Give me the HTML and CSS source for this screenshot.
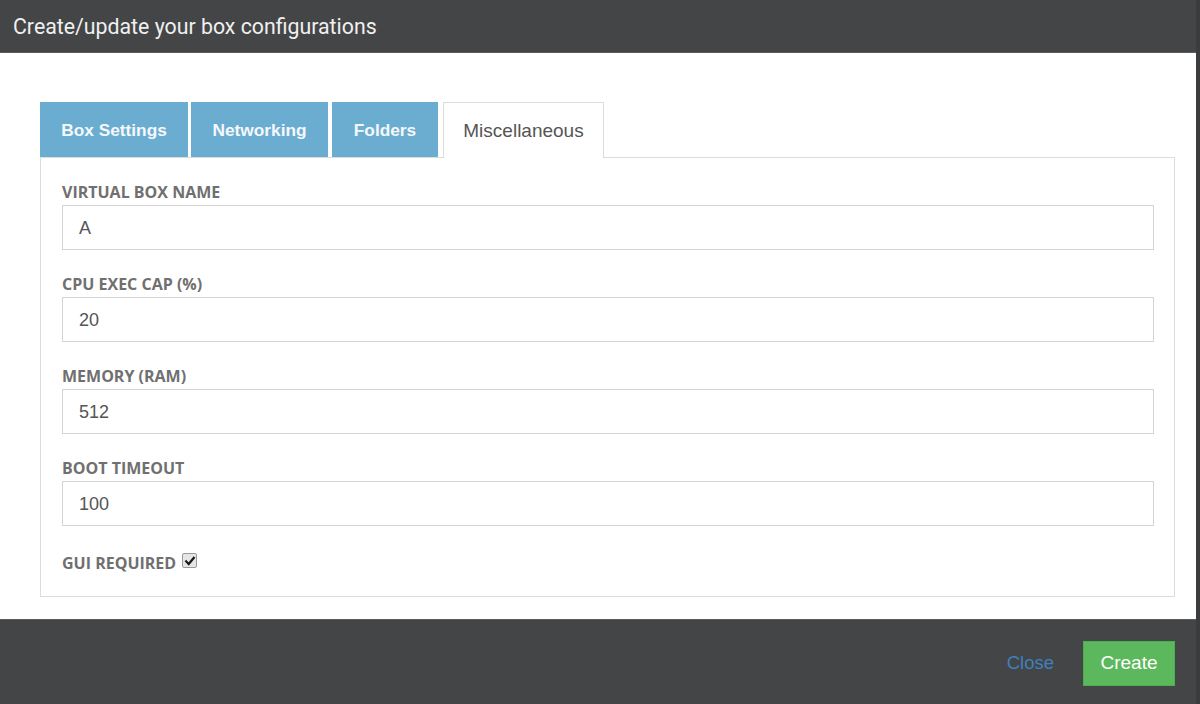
FILE: index.html
```html
<!DOCTYPE html>
<html>
<head>
<meta charset="utf-8">
<link rel="stylesheet" href="styles.css">
</head>
<body>
<div class="modal">
  <header class="modal-header">Create/update your box configurations</header>
  <main class="modal-body">
    <nav class="tabs">
      <span class="tab tab-box">Box Settings</span>
      <span class="tab tab-net">Networking</span>
      <span class="tab tab-fold">Folders</span>
      <span class="tab tab-active">Miscellaneous</span>
    </nav>
    <section class="panel">
      <div class="group">
        <label class="label">VIRTUAL BOX NAME</label>
        <div class="input">A</div>
      </div>
      <div class="group">
        <label class="label">CPU EXEC CAP (%)</label>
        <div class="input">20</div>
      </div>
      <div class="group">
        <label class="label">MEMORY (RAM)</label>
        <div class="input">512</div>
      </div>
      <div class="group">
        <label class="label">BOOT TIMEOUT</label>
        <div class="input">100</div>
      </div>
      <div class="check-row">
        <label class="label">GUI REQUIRED</label>
        <span class="checkbox"><svg viewBox="0 0 12 12" width="12" height="12"><path d="M2.2 6.4 L4.7 9 L9.8 2.8" fill="none" stroke="#1a1a1a" stroke-width="2.2" stroke-linecap="square"/></svg></span>
      </div>
    </section>
  </main>
  <footer class="modal-footer">
    <span class="close">Close</span>
    <span class="create">Create</span>
  </footer>
</div>
</body>
</html>
```
FILE: styles.css
```css
html, body { margin: 0; padding: 0; }
body {
  background: #3b3c3e;
  width: 1200px;
  height: 704px;
  overflow: hidden;
}
.modal {
  width: 1196px;
  height: 704px;
  display: flex;
  flex-direction: column;
}
.modal-header {
  height: 52px;
  background: #444547;
  border-bottom: 1px solid #5a5b5d;
  color: #f0f0f0;
  font-family: Roboto, "Liberation Sans", sans-serif;
  font-size: 21.3px;
  line-height: 53px;
  padding-left: 13px;
}
.modal-body {
  background: #fff;
  height: 566px;
  padding: 49px 21px 0 40px;
  box-sizing: border-box;
}
.tabs {
  display: flex;
  height: 55px;
  align-items: stretch;
}
.tab {
  font-family: "Liberation Sans", Arial, sans-serif;
  font-size: 17.3px;
  display: flex;
  align-items: center;
  justify-content: center;
  box-sizing: border-box;
  padding-top: 1px;
}
.tab-box, .tab-net, .tab-fold {
  background: #6badd1;
  color: #f4f8fb;
  font-weight: bold;
}
.tab-box { width: 148px; margin-right: 3px; }
.tab-net { width: 137px; margin-right: 4px; }
.tab-fold { width: 106px; margin-right: 5px; }
.tab-active {
  width: 161px;
  background: #fff;
  color: #555;
  font-size: 19px;
  border: 1px solid #dcdcdc;
  border-bottom: none;
  margin-bottom: -1px;
  position: relative;
  z-index: 1;
}
.panel {
  border: 1px solid #dcdcdc;
  height: 440px;
  box-sizing: border-box;
  padding: 24px 20px 0 21px;
}
.group {
  display: flex;
  flex-direction: column;
  margin-bottom: 24px;
}
.label {
  font-family: "Open Sans", "Liberation Sans", sans-serif;
  font-weight: bold;
  font-size: 16px;
  line-height: 20px;
  color: #707070;
  margin-bottom: 3px;
}
.input {
  height: 45px;
  box-sizing: border-box;
  border: 1px solid #d4d4d4;
  font-family: "Liberation Sans", Arial, sans-serif;
  font-size: 18px;
  color: #555;
  padding: 2px 0 0 16px;
  line-height: 41px;
}
.check-row {
  display: flex;
  align-items: flex-start;
  gap: 6px;
  padding-top: 3px;
}
.check-row .label { margin-bottom: 0; }
.checkbox {
  width: 15px;
  height: 15px;
  border: 1px solid #9a9a9a;
  border-radius: 2px;
  background: #e6e6e6;
  display: flex;
  align-items: center;
  justify-content: center;
  box-sizing: border-box;
}
.modal-footer {
  flex: 1;
  background: #444547;
  border-top: 1px solid #5a5b5d;
  display: flex;
  align-items: center;
  justify-content: flex-end;
  padding-right: 21px;
  padding-top: 2px;
}
.close {
  font-family: "Liberation Sans", Arial, sans-serif;
  font-size: 18.5px;
  color: #3f80bd;
  margin-right: 29px;
}
.create {
  background: #5cb85c;
  border: 1px solid #4cae4c;
  color: #fff;
  font-family: "Liberation Sans", Arial, sans-serif;
  font-size: 19px;
  width: 92px;
  height: 45px;
  display: flex;
  align-items: center;
  justify-content: center;
  box-sizing: border-box;
}
```
